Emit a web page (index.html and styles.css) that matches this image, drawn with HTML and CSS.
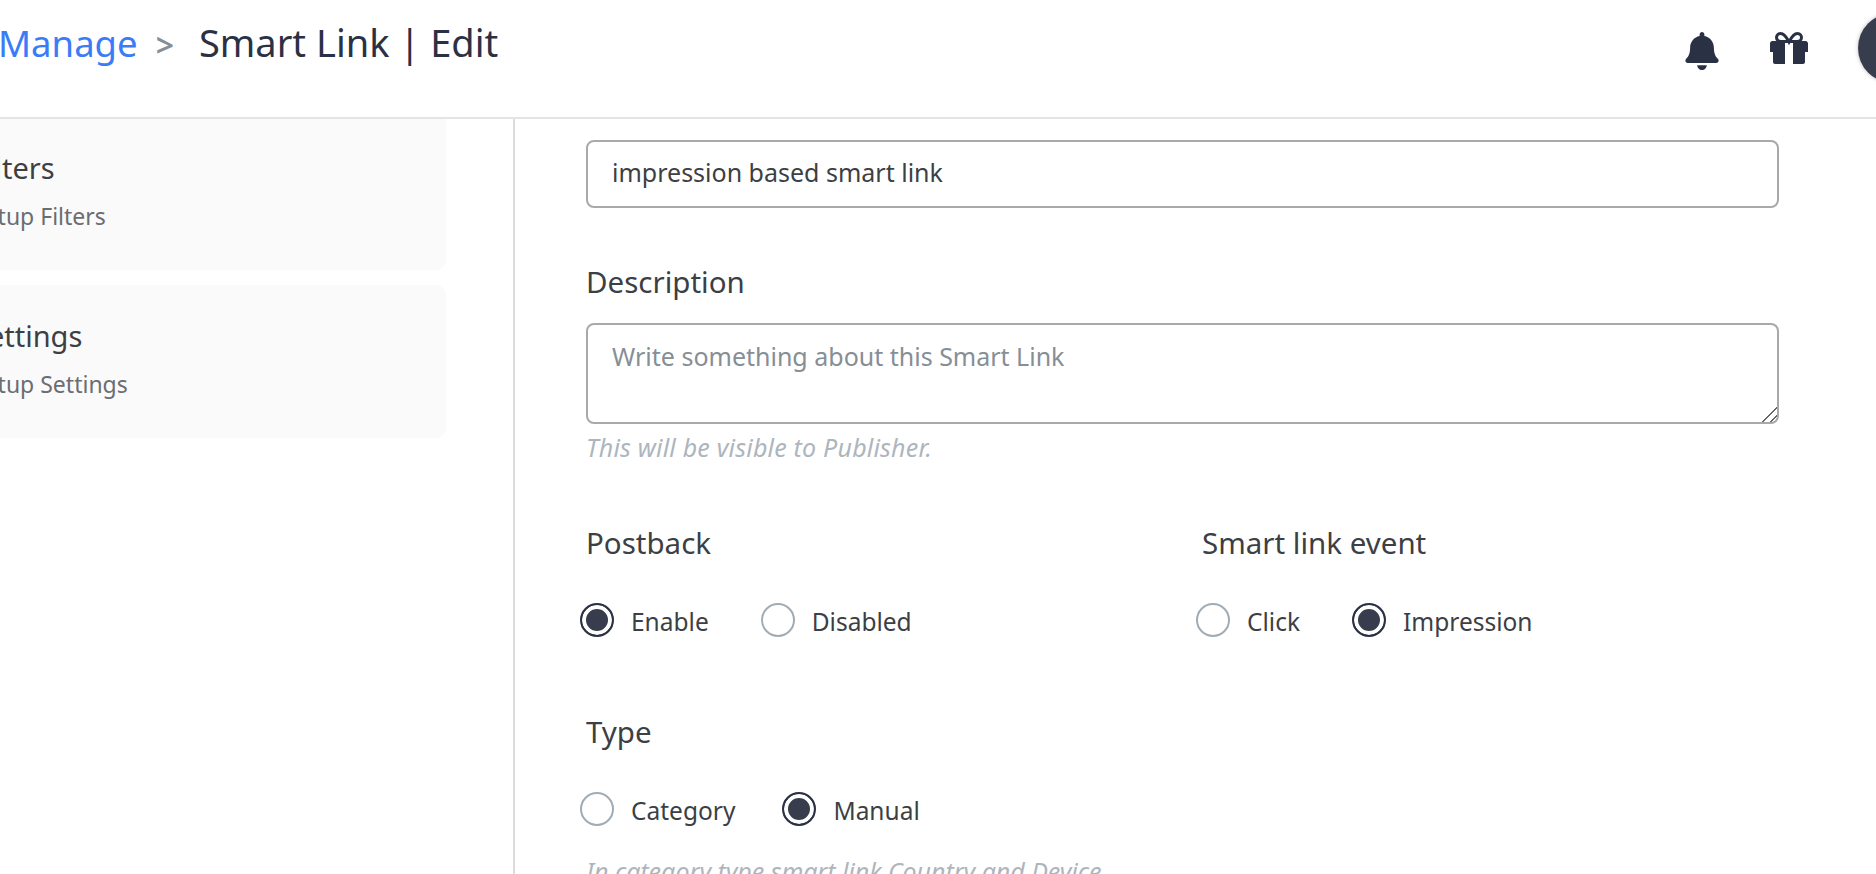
FILE: index.html
```html
<!DOCTYPE html>
<html lang="en">
  <head>
    <meta charset="UTF-8" />
    <title>Smart Link | Edit</title>
    <link rel="stylesheet" href="styles.css">
  </head>
  <body>
    <div id="page">
      <header class="topbar">
        <div class="crumbs">
          <a href="#" class="crumb-link">Manage</a>
          <span class="crumb-sep">&gt;</span>
          <span class="crumb-title">Smart Link | Edit</span>
        </div>
        <div class="top-icons">
          <svg class="icon-bell" viewBox="0 0 448 512"><path d="M224 512c35.32 0 63.97-28.65 63.97-64H160.03c0 35.35 28.65 64 63.97 64zm215.39-149.71c-19.32-20.76-55.47-51.99-55.47-154.29 0-77.7-54.48-139.9-127.94-155.16V32c0-17.67-14.32-32-31.98-32s-31.98 14.33-31.98 32v20.84C118.56 68.1 64.08 130.3 64.08 208c0 102.3-36.15 133.53-55.47 154.29-6 6.45-8.66 14.16-8.61 21.71.11 16.4 12.98 32 32.1 32h383.8c19.12 0 32-15.6 32.1-32 .05-7.55-2.61-15.27-8.61-21.71z"/></svg>
          <svg class="icon-gift" viewBox="0 0 38 32">
            <path class="bow" d="M19 10C16 4 13.500 1.500 10.500 1.500 8 1.500 6.500 3.300 6.500 5.500 6.500 8 8.500 9.500 11 9.500H27C29.500 9.500 31.500 8 31.500 5.500 31.500 3.300 30 1.500 27.500 1.500 24.500 1.500 22 4 19 10Z"/>
            <path d="M0 11.500C0 10.100 1.100 9 2.500 9H15V20H0ZM23 9H35.500C36.900 9 38 10.100 38 11.500V20H23ZM3 20H15V32H5C3.900 32 3 31.100 3 30ZM23 20H35V30C35 31.100 34.100 32 33 32H23Z"/>
          </svg>
          <div class="avatar"></div>
        </div>
      </header>
      <div class="content">
        <aside class="sidebar">
          <div class="side-card">
            <div class="side-title">Filters</div>
            <div class="side-sub">Setup Filters</div>
          </div>
          <div class="side-card">
            <div class="side-title">Settings</div>
            <div class="side-sub">Setup Settings</div>
          </div>
        </aside>
        <main class="form">
          <input class="field" type="text" value="impression based smart link" />
          <label class="label label-desc">Description</label>
          <textarea class="field field-area" placeholder="Write something about this Smart Link"></textarea>
          <p class="hint hint-desc">This will be visible to Publisher.</p>
          <div class="form-row">
            <div class="form-col">
              <label class="label">Postback</label>
              <div class="radios radios-wide">
                <label class="radio"><input type="radio" name="postback" checked /><span>Enable</span></label>
                <label class="radio"><input type="radio" name="postback" /><span>Disabled</span></label>
              </div>
            </div>
            <div class="form-col">
              <label class="label">Smart link event</label>
              <div class="radios radios-wide">
                <label class="radio"><input type="radio" name="event" /><span>Click</span></label>
                <label class="radio"><input type="radio" name="event" checked /><span>Impression</span></label>
              </div>
            </div>
          </div>
          <label class="label label-type">Type</label>
          <div class="radios radios-type">
            <label class="radio"><input type="radio" name="type" /><span>Category</span></label>
            <label class="radio"><input type="radio" name="type" checked /><span>Manual</span></label>
          </div>
          <p class="hint hint-type">In category type smart link Country and Device</p>
        </main>
      </div>
    </div>
  </body>
</html>
```

FILE: styles.css
```css
* {
  margin: 0;
  padding: 0;
  box-sizing: border-box;
  text-decoration: none;
}
html,
body {
  height: 874px;
  overflow: hidden;
  background: #fff;
}
body {
  font-family: "Noto Sans", "Open Sans", sans-serif;
  color: #3c3f44;
}
/* the page is scrolled sideways in the shot, so the left part is cut off */
#page {
  width: 2000px;
  margin-left: -100px;
}
.topbar {
  height: 119px;
  display: flex;
  justify-content: space-between;
  padding: 16px 0 0 100px;
  border-bottom: 2px solid #e4e4e4;
}
.crumbs {
  display: flex;
  align-items: baseline;
  height: 50px;
  font-size: 36.500px;
}
.crumb-link {
  color: #3b7cf6;
  margin-left: -2px;
}
.crumb-sep {
  color: #868e96;
  font-size: 32px;
  font-weight: 600;
  margin: 0 25px 0 18px;
}
.crumb-title {
  color: #2b3145;
  font-size: 38px;
}
.top-icons {
  width: 215px;
  flex: none;
  display: flex;
  align-items: flex-start;
  padding-top: 16px;
}
.icon-bell {
  width: 34px;
  height: 38px;
  flex: none;
  fill: #2b3145;
}
.icon-gift {
  width: 38px;
  height: 32px;
  flex: none;
  margin-left: 51px;
  fill: #2b3145;
}
.icon-gift .bow {
  fill: none;
  stroke: #2b3145;
  stroke-width: 3;
}
.avatar {
  width: 70px;
  height: 70px;
  flex: none;
  margin: -19px 0 0 50px;
  border-radius: 50%;
  background: #383d4d;
  box-shadow: 0 0 4px rgba(0, 0, 0, 0.25);
}
.content {
  display: flex;
}
.sidebar {
  width: 615px;
  height: 760px;
  padding-right: 67px;
  border-right: 2px solid #dcdcdc;
}
.side-card {
  height: 151px;
  margin-bottom: 15px;
  padding: 30px 0 0 72px;
  background: #fafafa;
  border-radius: 0 0 10px 10px;
}
.side-card + .side-card {
  border-radius: 10px;
  height: 153px;
  padding-top: 32px;
}
.side-title {
  font-size: 29px;
  line-height: 38px;
}
.side-sub {
  margin-top: 14px;
  font-size: 23px;
  line-height: 30px;
  color: #6a6d72;
}
.form {
  width: 1193px;
  margin-left: 71px;
  padding-top: 21px;
}
.field {
  display: block;
  width: 100%;
  height: 68px;
  padding: 0 24px 4px;
  border: 2px solid #a9a9a9;
  border-radius: 8px;
  font-family: inherit;
  font-size: 25px;
  color: #3c3f44;
  background: #fff;
}
.field-area {
  height: 101px;
  padding-top: 14px;
  margin-top: 22px;
}
.field-area::placeholder {
  color: #868e96;
  opacity: 1;
}
.field-area::-webkit-resizer {
  background: linear-gradient(135deg, transparent 0 48%, #666 48% 55%, transparent 55% 74%, #666 74% 81%, transparent 81%);
}
.label {
  display: block;
  font-size: 29.500px;
  line-height: 38px;
}
.label-desc {
  margin-top: 55px;
}
.hint {
  font-size: 25px;
  line-height: 30px;
  font-style: italic;
  letter-spacing: 0.2px;
  color: #adb5bd;
}
.hint-desc {
  margin-top: 8px;
}
.form-row {
  display: grid;
  grid-template-columns: 616px 1fr;
  margin-top: 62px;
}
.radios {
  display: flex;
  margin: 41px 0 0 -6px;
  gap: 52px;
}
.radios-type {
  gap: 47px;
}
.radio {
  display: flex;
  align-items: center;
  gap: 17px;
  font-size: 24.500px;
  line-height: 34px;
}
.radio span {
  position: relative;
  top: 2px;
}
.radio input {
  appearance: none;
  width: 34px;
  height: 34px;
  border: 2px solid #a0acb5;
  border-radius: 50%;
  background: #fff;
}
.radio input:checked {
  border: 2px solid #2b3145;
  background: #383d4d;
  box-shadow: inset 0 0 0 4px #fff;
}
.label-type {
  margin-top: 76px;
}
.hint-type {
  margin-top: 30px;
  letter-spacing: -0.05px;
}
```
